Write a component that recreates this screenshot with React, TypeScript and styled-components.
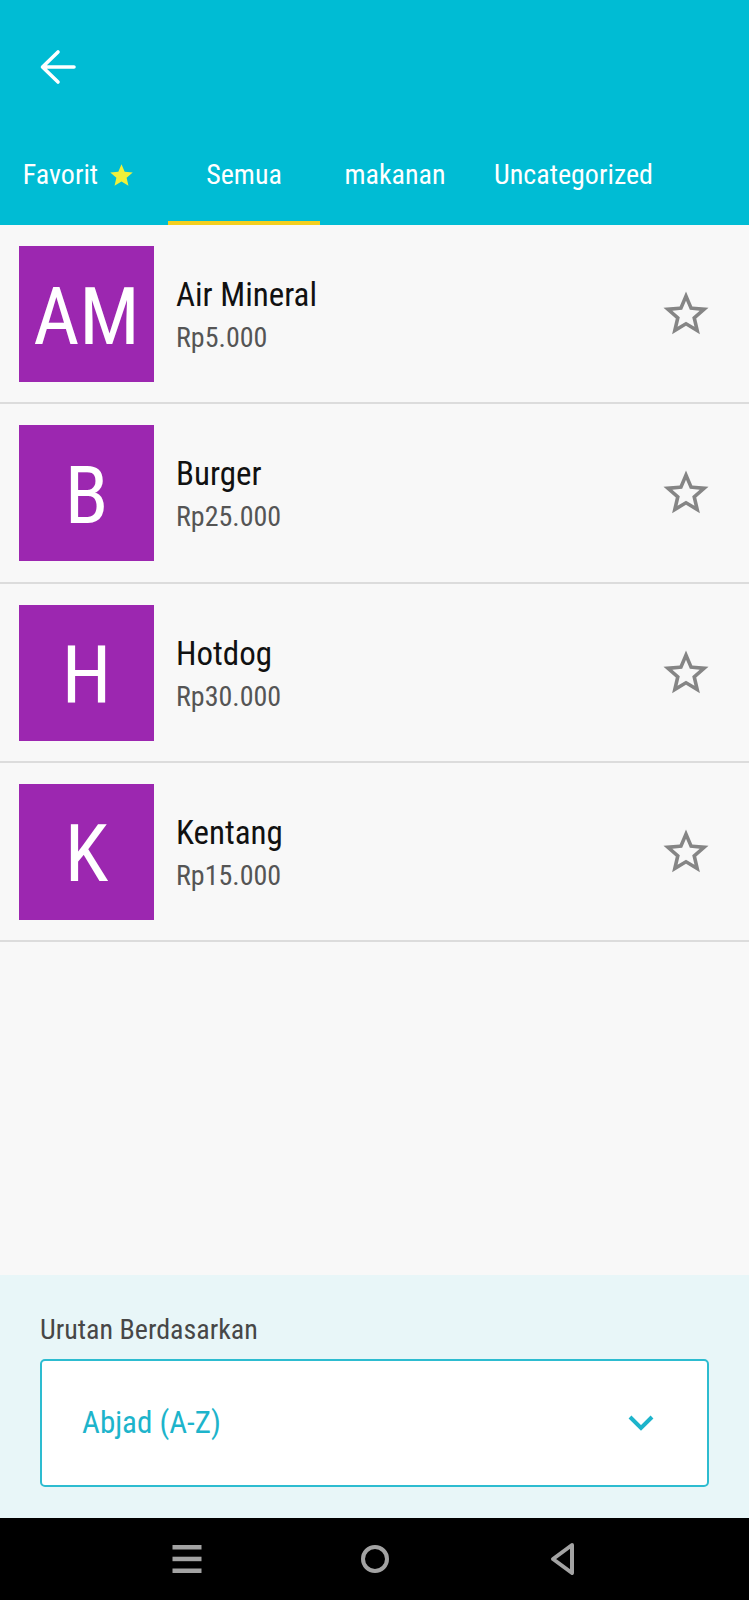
import React from "react";
import styled, { createGlobalStyle } from "styled-components";

const FONT = `"Roboto Condensed", "Liberation Sans Narrow", "DejaVu Sans Condensed", Roboto, sans-serif`;

const GlobalStyle = createGlobalStyle`
  html, body { margin: 0; padding: 0; }
  body { background: #f8f8f8; font-family: ${FONT}; }
  * { box-sizing: border-box; }
`;

const Page = styled.div`
  width: 749px;
  height: 1600px;
  display: flex;
  flex-direction: column;
  background: #f8f8f8;
  overflow: hidden;
`;

const Header = styled.header`
  background: #00bcd4;
  display: flex;
  flex-direction: column;
`;

const Toolbar = styled.div`
  height: 125px;
  padding: 8px 0 0 32px;
  display: flex;
  align-items: center;
`;

const IconButton = styled.button`
  width: 50px;
  height: 50px;
  padding: 0;
  border: 0;
  background: transparent;
  display: flex;
  align-items: center;
  justify-content: center;
`;

const TabBar = styled.nav`
  height: 100px;
  display: flex;
`;

const Tab = styled.div<{ $width: number; $active?: boolean }>`
  width: ${(p) => p.$width}px;
  flex: none;
  display: flex;
  align-items: center;
  justify-content: center;
  gap: 10px;
  color: #ffffff;
  font-size: 28px;
  line-height: 36px;
  border-bottom: 4px solid ${(p) => (p.$active ? "#f4cf1f" : "transparent")};
  padding-top: 4px;
`;

const List = styled.main`
  flex: 1;
  display: flex;
  flex-direction: column;
`;

const Row = styled.div`
  display: flex;
  align-items: center;
  padding: 21px 36px 20.3px 19px;
  border-bottom: 2px solid #dcdcdc;
`;

const Avatar = styled.div`
  width: 135px;
  height: 136px;
  flex: none;
  background: #9c27b0;
  color: #ffffff;
  display: flex;
  align-items: center;
  justify-content: center;
  font-size: 80px;
  line-height: 1;
  padding-top: 5px;
`;

const Info = styled.div`
  margin-left: 22px;
  padding-top: 4px;
  display: flex;
  flex-direction: column;
`;

const Name = styled.div`
  font-size: 33px;
  line-height: 38px;
  color: #111111;
`;

const Price = styled.div`
  font-size: 28px;
  line-height: 36px;
  margin-top: 6px;
  color: #555555;
`;

const FavButton = styled.div`
  margin-left: auto;
  display: flex;
`;

const SortPanel = styled.section`
  background: #e8f6f8;
  padding: 37px 40px 31px 40px;
  display: flex;
  flex-direction: column;
`;

const SortLabel = styled.div`
  font-size: 28px;
  line-height: 36px;
  color: #474747;
  margin-bottom: 11px;
`;

const Select = styled.div`
  height: 128px;
  background: #ffffff;
  border: 2px solid #2dbcd0;
  border-radius: 5px;
  display: flex;
  align-items: center;
  justify-content: space-between;
  padding: 0 52px 0 40px;
  color: #1db4cb;
  font-size: 31px;
  line-height: 40px;
`;

const NavBar = styled.footer`
  height: 82px;
  background: #000000;
  display: flex;
  align-items: center;
  justify-content: center;
  gap: 128px;
`;

const NavSlot = styled.div`
  width: 60px;
  height: 40px;
  display: flex;
  align-items: center;
  justify-content: center;
`;

const BackArrow = () => (
  <svg width="40" height="40" viewBox="0 0 40 40">
    <path
      d="M37 16 H6 M21 1 L5.5 16 L21 31"
      fill="none"
      stroke="#ffffff"
      strokeWidth="3.6"
      strokeLinecap="round"
      strokeLinejoin="round"
      transform="translate(0 4)"
    />
  </svg>
);

const SmallStar = () => (
  <svg width="27" height="27" viewBox="0 0 24 24" style={{ marginRight: 10 }}>
    <path
      d="M12 17.27L18.18 21l-1.64-7.03L22 9.24l-7.19-.61L12 2 9.19 8.63 2 9.24l5.46 4.73L5.82 21z"
      fill="#f0f03a"
    />
  </svg>
);

const StarOutline = () => (
  <svg width="54" height="54" viewBox="0 0 24 24">
    <path
      d="M22 9.24l-7.19-.62L12 2 9.19 8.63 2 9.24l5.46 4.73L5.82 21 12 17.27 18.18 21l-1.63-7.03L22 9.24zM12 15.4l-3.76 2.27 1-4.28-3.32-2.88 4.38-.38L12 6.1l1.71 4.04 4.38.38-3.32 2.88 1 4.28L12 15.4z"
      fill="#858585"
    />
  </svg>
);

const Chevron = () => (
  <svg width="28" height="20" viewBox="0 0 28 20">
    <polyline
      points="3,4 14,15 25,4"
      fill="none"
      stroke="#1db4cb"
      strokeWidth="4"
      strokeLinejoin="miter"
    />
  </svg>
);

const MenuIcon = () => (
  <svg width="30" height="30" viewBox="0 0 30 30">
    <rect x="0.5" y="1" width="29" height="4.5" fill="#a3a3a3" />
    <rect x="0.5" y="12.7" width="29" height="4.5" fill="#a3a3a3" />
    <rect x="0.5" y="24.5" width="29" height="4.5" fill="#a3a3a3" />
  </svg>
);

const HomeIcon = () => (
  <svg width="30" height="30" viewBox="0 0 30 30">
    <circle cx="15" cy="15" r="12" fill="none" stroke="#a3a3a3" strokeWidth="4" />
  </svg>
);

const BackIcon = () => (
  <svg width="30" height="34" viewBox="0 0 30 34">
    <path
      d="M24 3 L5 17 L24 31 Z"
      fill="none"
      stroke="#a3a3a3"
      strokeWidth="4"
      strokeLinejoin="round"
    />
  </svg>
);

const items = [
  { initials: "AM", name: "Air Mineral", price: "Rp5.000" },
  { initials: "B", name: "Burger", price: "Rp25.000" },
  { initials: "H", name: "Hotdog", price: "Rp30.000" },
  { initials: "K", name: "Kentang", price: "Rp15.000" },
];

export default function App() {
  return (
    <>
      <GlobalStyle />
      <Page>
        <Header>
          <Toolbar>
            <IconButton aria-label="Kembali">
              <BackArrow />
            </IconButton>
          </Toolbar>
          <TabBar>
            <Tab $width={168}>
              Favorit
              <SmallStar />
            </Tab>
            <Tab $width={152} $active>
              Semua
            </Tab>
            <Tab $width={150}>makanan</Tab>
            <Tab $width={207}>Uncategorized</Tab>
          </TabBar>
        </Header>
        <List>
          {items.map((it) => (
            <Row key={it.name}>
              <Avatar>{it.initials}</Avatar>
              <Info>
                <Name>{it.name}</Name>
                <Price>{it.price}</Price>
              </Info>
              <FavButton>
                <StarOutline />
              </FavButton>
            </Row>
          ))}
        </List>
        <SortPanel>
          <SortLabel>Urutan Berdasarkan</SortLabel>
          <Select>
            <span>Abjad (A-Z)</span>
            <Chevron />
          </Select>
        </SortPanel>
        <NavBar>
          <NavSlot>
            <MenuIcon />
          </NavSlot>
          <NavSlot>
            <HomeIcon />
          </NavSlot>
          <NavSlot>
            <BackIcon />
          </NavSlot>
        </NavBar>
      </Page>
    </>
  );
}
